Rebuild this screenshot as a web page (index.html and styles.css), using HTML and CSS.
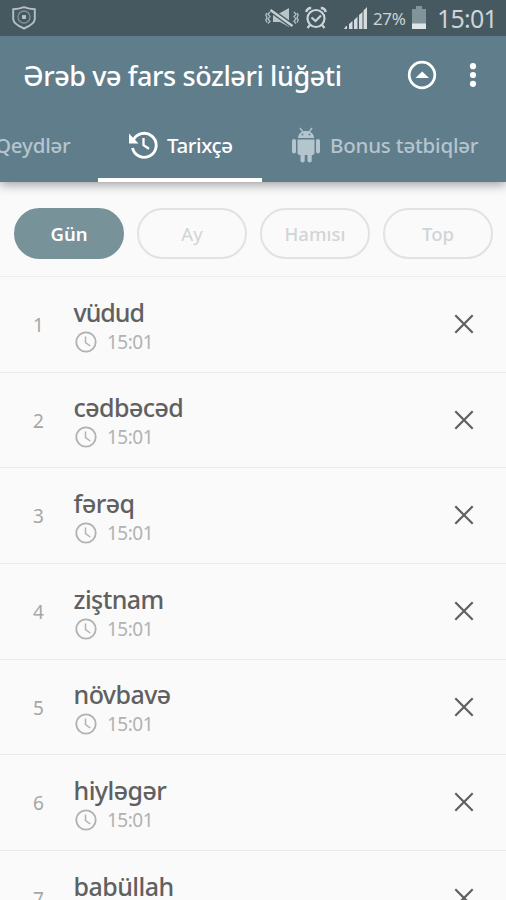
FILE: index.html
```html
<!DOCTYPE html>
<html lang="az">
<head>
<meta charset="utf-8">
<title>Ərəb və fars sözləri lüğəti</title>
<link rel="stylesheet" href="styles.css">
</head>
<body>
<svg class="defs" width="0" height="0" aria-hidden="true">
  <symbol id="clock" viewBox="0 0 22 22"><circle cx="11" cy="11" r="9.700" fill="none" stroke="currentColor" stroke-width="1.800"/><path d="M10.500 5.500v6l4.800 3.500" fill="none" stroke="currentColor" stroke-width="1.500"/></symbol>
  <symbol id="close" viewBox="0 0 20 20"><path d="M1.300 1.300l17.400 17.400M18.700 1.300L1.300 18.700" stroke="currentColor" stroke-width="2.200"/></symbol>
</svg>
<div class="screen">
  <header class="status">
    <svg class="shield" width="24" height="24" viewBox="0 0 24 24" fill="none" stroke="#b5bfc3"><path d="M12 1.200Q7 3.200 1.200 3.200V13Q1.200 18 12 22.500Q22.800 18 22.800 13V3.200Q17 3.200 12 1.200Z" stroke-width="1.900"/><circle cx="12" cy="11" r="6" stroke="#82949b" stroke-width="1.300"/><path d="M10.500 9.500h3v3h-3z" fill="#b5bfc3"/></svg>
    <div class="indicators">
      <svg class="mute" width="34" height="22" viewBox="0 0 34 22"><path d="M8 6h7l9-5v19l-9-5H8z" fill="#bac5c9"/><path d="M5.500 3l22 16" stroke="#465860" stroke-width="5"/><path d="M5.500 3l22 16" stroke="#c7d0d3" stroke-width="2.400"/><path d="M5 5l-2 2.300 2 2.300-2 2.300 2 2.300-2 2.300M2 6L.8 8 2 10.500.8 13 2 15.500M29 5l2 2.300-2 2.300 2 2.300-2 2.300 2 2.300M32 6l1.200 2L32 10.500l1.200 2.500-1.200 2.500" fill="none" stroke="#b4bfc4" stroke-width="1.300"/></svg>
      <svg class="alarm" width="22" height="24" viewBox="0 0 22 24" fill="none" stroke="#cbd4d7"><circle cx="11" cy="12.500" r="8.500" stroke-width="2.200"/><path d="M1.200 6q1-4 5-4M15.800 2q4 0 5 4" stroke-width="2.500"/><path d="M5 19l-2.500 3M17 19l2.500 3" stroke-width="2.200"/><path d="M6.500 11.500l4 3.500 5.500-5.500" stroke-width="2.200"/></svg>
      <svg class="signal" width="23" height="23" viewBox="0 0 23 23" fill="#d4dbde"><path d="M0 22h3v-3H2zM5 22h3.500v-8L5 17zM10 22h3.500V9.500L10 13zM15 22h3.500V5L15 8zM19.500 22H23V0l-3.500 3.500z"/></svg>
      <span class="percent">27%</span>
      <svg class="battery" width="14" height="23" viewBox="0 0 14 23"><path d="M4 0h6v3h4v20H0V3h4z" fill="#82949a"/><path d="M0 17.500h14V23H0z" fill="#e0e6e8"/></svg>
      <span class="clock">15:01</span>
    </div>
  </header>
  <div class="appbar">
    <div class="titlebar">
      <h1>Ərəb və fars sözləri lüğəti</h1>
      <svg class="up" width="30" height="30" viewBox="0 0 30 30"><circle cx="15" cy="15" r="12.800" fill="none" stroke="#fff" stroke-width="2.700"/><path d="M8.500 18l6.700-6.500L22 18z" fill="#fff"/></svg>
      <svg class="more" width="8" height="24" viewBox="0 0 8 24" fill="#fff"><circle cx="4" cy="3.200" r="3.100"/><circle cx="4" cy="12" r="3.100"/><circle cx="4" cy="20.800" r="3.100"/></svg>
    </div>
    <nav class="tabs">
      <a class="tab notes"><span>Qeydlər</span></a>
      <a class="tab history active"><svg width="30" height="28" viewBox="0 0 30 28" fill="none" stroke="#fff"><path d="M5 10A12 12 0 1 1 4.500 17" stroke-width="2.900"/><path d="M1 2.500V12.500H10.500z" fill="#fff" stroke="none"/><path d="M15.500 7v7.200l5.500 3.500" stroke-width="2.300"/></svg><span>Tarixçə</span></a>
      <a class="tab bonus"><svg width="28" height="36" viewBox="0 0 28 36" fill="#b5c5ce"><path d="M6 11C6 1.500 22 1.500 22 11z"/><path d="M8 1l3 4M20 1l-3 4" stroke="#b5c5ce" stroke-width="1.300"/><path d="M5.500 12.500h17V26q0 2-2 2h-13q-2 0-2-2z"/><rect x="0" y="12" width="4" height="14.500" rx="2"/><rect x="24" y="12" width="4" height="14.500" rx="2"/><rect x="8.500" y="25" width="4.200" height="10.500" rx="2"/><rect x="15.500" y="25" width="4.200" height="10.500" rx="2"/><circle cx="10.500" cy="7.500" r=".9" fill="#607d8b"/><circle cx="17.500" cy="7.500" r=".9" fill="#607d8b"/></svg><span>Bonus tətbiqlər</span></a>
    </nav>
  </div>
  <div class="filters">
    <button class="pill selected"><span>Gün</span></button>
    <button class="pill light"><span>Ay</span></button>
    <button class="pill"><span>Hamısı</span></button>
    <button class="pill"><span>Top</span></button>
  </div>
  <main class="list">
    <div class="row"><span class="num">1</span><div class="entry"><div class="word narrow">vüdud</div><div class="time"><svg><use href="#clock"/></svg><span>15:01</span></div></div><svg class="close"><use href="#close"/></svg></div>
    <div class="row"><span class="num">2</span><div class="entry"><div class="word">cədbəcəd</div><div class="time"><svg><use href="#clock"/></svg><span>15:01</span></div></div><svg class="close"><use href="#close"/></svg></div>
    <div class="row"><span class="num">3</span><div class="entry"><div class="word">fərəq</div><div class="time"><svg><use href="#clock"/></svg><span>15:01</span></div></div><svg class="close"><use href="#close"/></svg></div>
    <div class="row"><span class="num">4</span><div class="entry"><div class="word">ziştnam</div><div class="time"><svg><use href="#clock"/></svg><span>15:01</span></div></div><svg class="close"><use href="#close"/></svg></div>
    <div class="row"><span class="num">5</span><div class="entry"><div class="word">növbavə</div><div class="time"><svg><use href="#clock"/></svg><span>15:01</span></div></div><svg class="close"><use href="#close"/></svg></div>
    <div class="row"><span class="num">6</span><div class="entry"><div class="word">hiyləgər</div><div class="time"><svg><use href="#clock"/></svg><span>15:01</span></div></div><svg class="close"><use href="#close"/></svg></div>
    <div class="row"><span class="num">7</span><div class="entry"><div class="word">babüllah</div><div class="time"><svg><use href="#clock"/></svg><span>15:01</span></div></div><svg class="close"><use href="#close"/></svg></div>
  </main>
</div>
</body>
</html>
```
FILE: styles.css
```css
* { box-sizing: border-box; }
body { margin: 0; background: #fafafa; font-family: "Noto Sans", sans-serif; }
svg { display: block; flex: none; }
.defs { position: absolute; }
.screen { width: 506px; height: 900px; overflow: hidden; display: flex; flex-direction: column; }

.status { height: 36px; flex: none; display: flex; align-items: center; justify-content: space-between; padding: 0 9px 0 12px; background: #465860; color: #ccd4d7; }
.indicators { display: flex; align-items: center; height: 36px; }
.alarm { margin-left: 5px; }
.signal { margin-left: 17px; margin-top: 1px; }
.percent { width: 40px; margin-left: 6px; font-size: 17px; letter-spacing: -.4px; white-space: nowrap; }
.mute { margin-right: 1px; }
.battery { margin-left: -1px; margin-top: -1px; }
.clock { width: 60px; margin-left: 11px; font-size: 25px; line-height: 36px; letter-spacing: -.8px; white-space: nowrap; }

.appbar { height: 146px; flex: none; background: #607d8b; box-shadow: 0 2px 11px rgba(0, 0, 0, .42); clip-path: inset(0 0 -16px 0); z-index: 1; }
.titlebar { height: 78px; display: flex; align-items: center; padding: 0 29px 0 23px; }
h1 { margin: 2px 0 0; flex: 1; color: #fff; font-size: 27px; font-weight: 500; line-height: 36px; letter-spacing: -.4px; white-space: nowrap; }
.more { margin-left: 32px; }
.tabs { height: 68px; display: flex; overflow: hidden; font-size: 20.500px; font-weight: 500; letter-spacing: -.2px; color: #b5c5ce; }
.tab { display: flex; align-items: center; height: 68px; padding-bottom: 7px; white-space: nowrap; flex: none; }
.notes { width: 98px; }
.notes span { margin-left: -5px; }
.history { width: 164px; padding-left: 30px; gap: 9px; border-bottom: 4px solid #fff; padding-bottom: 3px; color: #fff; font-weight: 550; letter-spacing: -.4px; }
.bonus { width: 244px; padding-left: 30px; gap: 10px; }

.filters { height: 95px; flex: none; display: grid; grid-template-columns: repeat(4, 110px); column-gap: 13px; padding: 26px 0 0 14px; border-bottom: 1px solid #ededed; }
.pill { height: 51px; padding: 0; border: 2px solid #dfe3e2; border-radius: 26px; background: transparent; color: #d0d5d7; font: 500 18.500px "Noto Sans", sans-serif; }
.light { font-weight: 400; }
.selected { border-color: #78929a; background: #78929a; color: #fff; font-weight: 600; }

.row { height: 95.700px; display: grid; grid-template-columns: 73.500px 1fr 20px; padding-right: 32px; border-bottom: 1px solid #ebebeb; }
.num { padding: 34px 0 0 33px; font-size: 19px; line-height: 28px; color: #a6a6a6; }
.word { margin-top: 17.500px; height: 34px; font-size: 25px; font-weight: 500; line-height: 34px; letter-spacing: -.55px; color: #606060; }
.narrow { letter-spacing: -1px; }
.time { display: flex; align-items: center; gap: 10px; height: 26px; padding-left: 1.500px; font-size: 19px; line-height: 26px; letter-spacing: -.5px; color: #b2b2b2; }
.time svg { width: 22px; height: 22px; }
.close { width: 20px; height: 20px; margin-top: 37px; color: #606060; }
```
